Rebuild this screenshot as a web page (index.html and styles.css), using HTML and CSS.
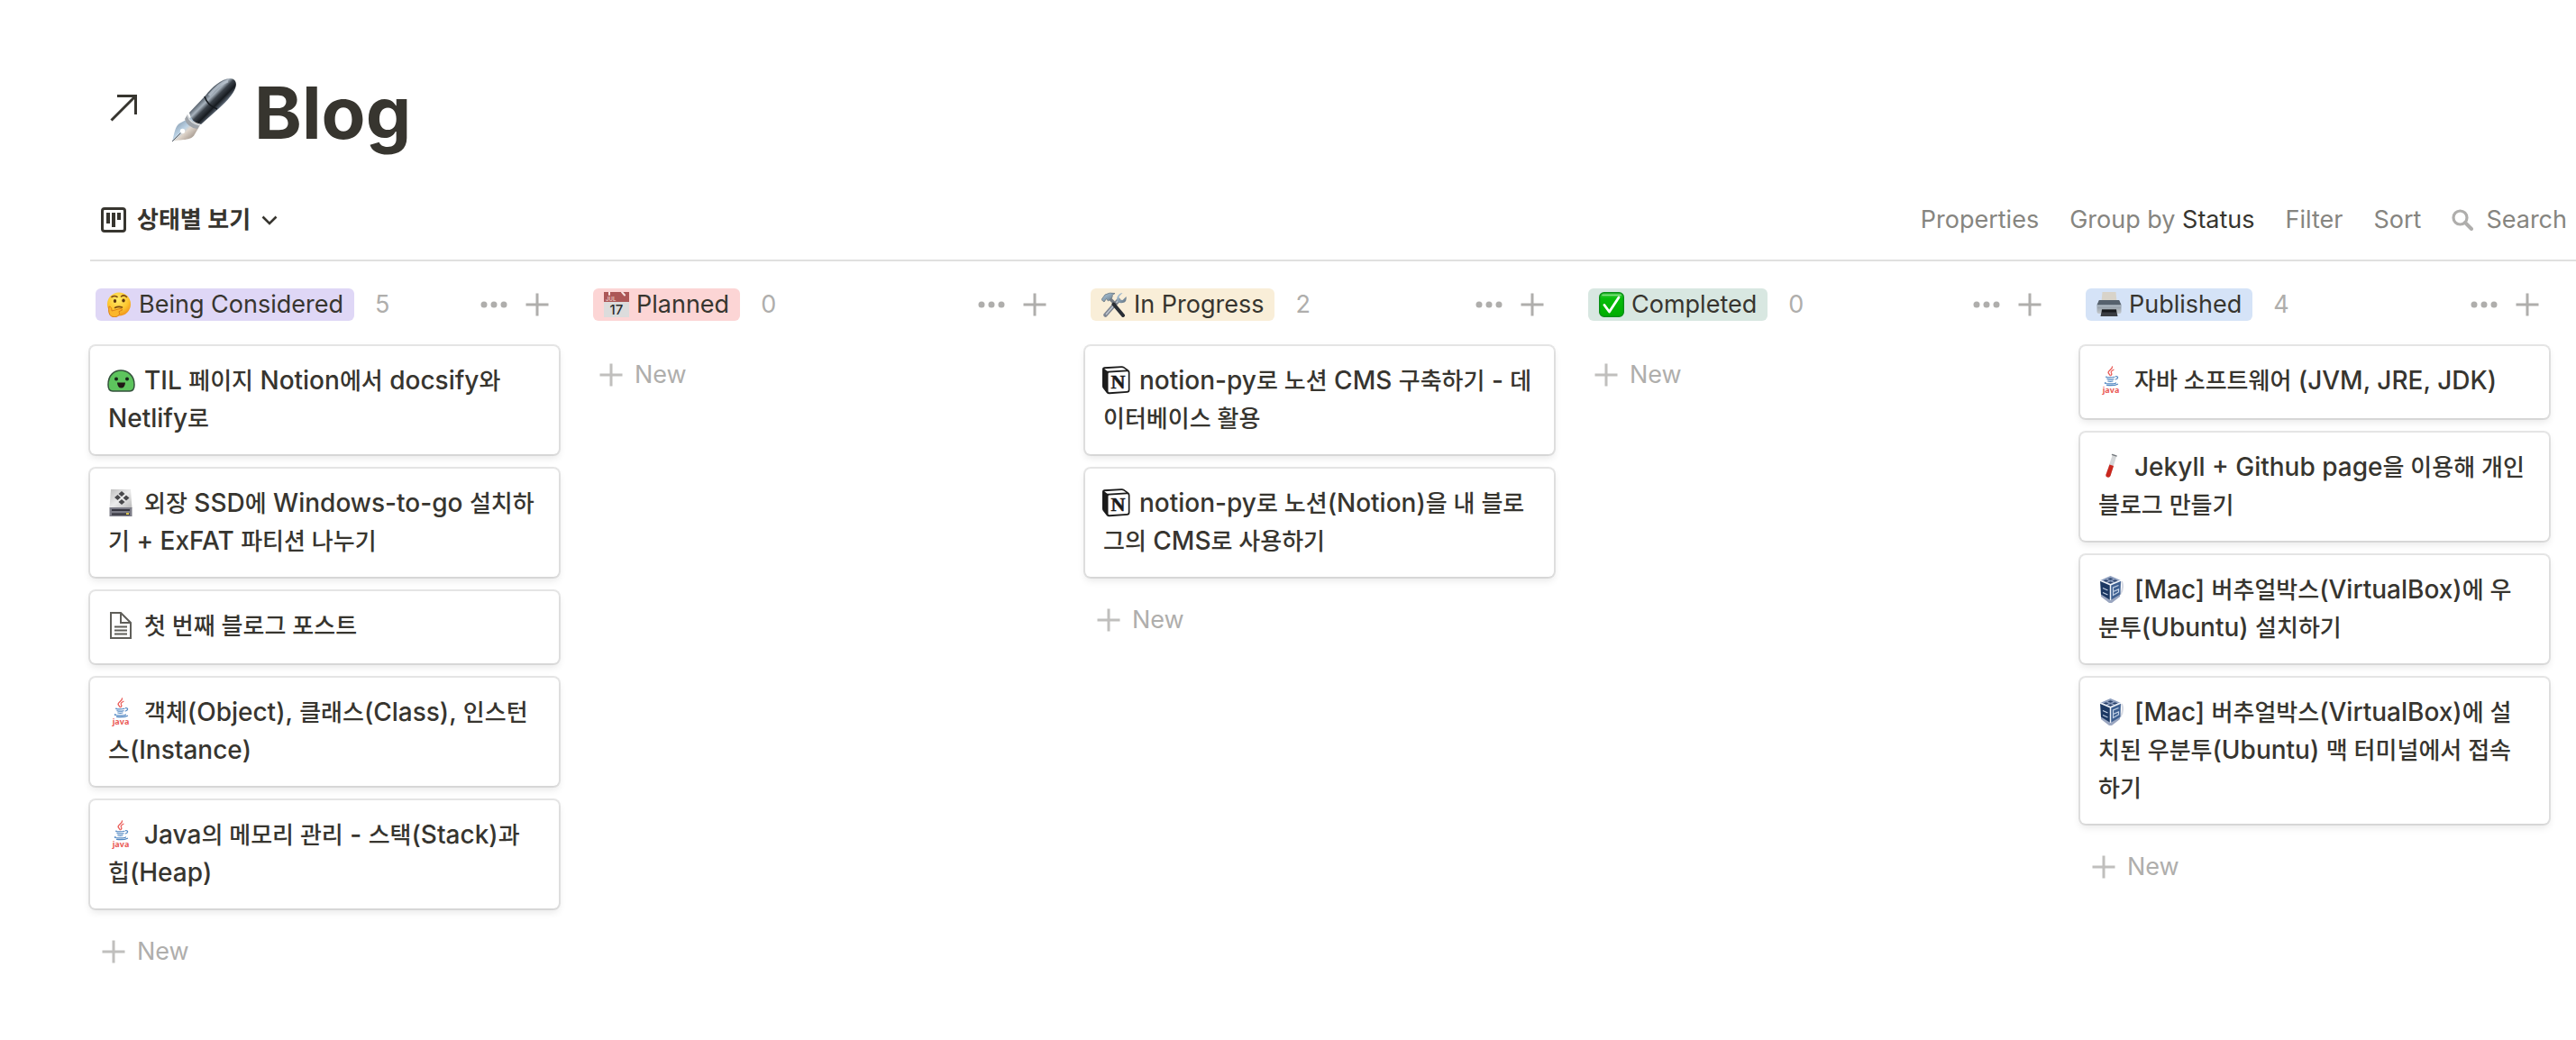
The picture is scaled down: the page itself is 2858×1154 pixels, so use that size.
FILE: index.html
```html
<!DOCTYPE html>
<html lang="ko">
<head>
<meta charset="utf-8">
<meta name="viewport" content="width=device-width, initial-scale=1">
<title>Blog</title>
<link rel="stylesheet" href="styles.css">
</head>
<body>
<svg class="defs" aria-hidden="true">
  <defs>
    <linearGradient id="barrel" gradientUnits="userSpaceOnUse" x1="34" y1="22" x2="50" y2="38">
      <stop offset="0" stop-color="#3c4651"/><stop offset=".3" stop-color="#a9b4bf"/><stop offset=".5" stop-color="#3a4149"/><stop offset=".75" stop-color="#171b20"/><stop offset="1" stop-color="#667382"/>
    </linearGradient>
    <linearGradient id="nib" x1="0" y1="0" x2="1" y2="1">
      <stop offset="0" stop-color="#6a7d91"/><stop offset=".45" stop-color="#bcd3e6"/><stop offset=".55" stop-color="#e0d6cc"/><stop offset="1" stop-color="#77695f"/>
    </linearGradient>
    <radialGradient id="face" cx=".45" cy=".3" r=".75">
      <stop offset="0" stop-color="#ffec6b"/><stop offset=".6" stop-color="#fdc62f"/><stop offset="1" stop-color="#ee8b1a"/>
    </radialGradient>
    <linearGradient id="check" x1="0" y1="0" x2="0" y2="1">
      <stop offset="0" stop-color="#3ecb3e"/><stop offset=".25" stop-color="#06bd0a"/><stop offset="1" stop-color="#00ad00"/>
    </linearGradient>
    <linearGradient id="printer" x1="0" y1="0" x2="0" y2="1">
      <stop offset="0" stop-color="#59636e"/><stop offset=".4" stop-color="#8d98a3"/><stop offset="1" stop-color="#c3c8cc"/>
    </linearGradient>
    <linearGradient id="steel" x1="0" y1="0" x2="1" y2="1">
      <stop offset="0" stop-color="#b3d0e6"/><stop offset="1" stop-color="#60707d"/>
    </linearGradient>
    <linearGradient id="drive" x1="0" y1="0" x2="1" y2="1">
      <stop offset="0" stop-color="#bdbdbd"/><stop offset=".5" stop-color="#ececec"/><stop offset="1" stop-color="#b9b9b9"/>
    </linearGradient>
    <symbol id="plus" viewBox="0 0 26 26"><path d="M13 0.5v25M0.5 13h25" stroke="currentColor" stroke-width="3"/></symbol>
    <symbol id="dots" viewBox="0 0 30 26"><g fill="currentColor"><circle cx="4" cy="13" r="3.5"/><circle cx="15" cy="13" r="3.5"/><circle cx="26" cy="13" r="3.5"/></g></symbol>
    <symbol id="java" viewBox="0 0 32 32">
      <g fill="none" stroke-linecap="round">
        <path d="M17.500 .8c.5 3.200-5.500 4.200-4.300 7.200l2 2.700" stroke="#ea5b57" stroke-width="1.300"/>
        <path d="M19 4.200c-3 1.400-3.500 2.600-2 4.800l-.8 1.400" stroke="#ea5b57" stroke-width="1.200"/>
        <path d="M11 12c-2 1.200 7 1.200 9 .2M12 14.700c2 .6 5 .6 7 0M12.800 17c1.500.5 3.700.5 5.200 0M10 18.600c-3.500 1.600 9 1.900 11.500.3M21.500 11.700c3-.3 2.800 2.400-.3 3.300M11.500 21.400c5 .5 9.500.2 12-1.200" stroke="#5288c2" stroke-width="1.200"/>
      </g>
      <text x="16" y="29.500" text-anchor="middle" font-family="Noto Sans" font-size="9" font-weight="700" fill="#ea5b57">java</text>
    </symbol>
    <symbol id="notion" viewBox="0 0 32 32">
      <path d="M1 3.500Q1 1.500 3 1.300L22 .2Q24 0 25.500 1.200L30 4.500Q31.500 5.500 31.500 7.500V27Q31.500 29.600 29 29.800L9 31.300Q7 31.500 5.800 30L1.600 24.500Q1 23.500 1 22Z" fill="#1b1b1b"/>
      <path d="M7.500 8.800Q7.500 7.600 8.700 7.500L28.400 6.300Q29.800 6.200 29.800 7.600V26.500Q29.800 27.900 28.500 28L8.800 29.200Q7.500 29.300 7.500 28Z" fill="#fff"/>
      <path d="M3.200 3.200L22.500 1.900Q23.600 1.900 24.500 2.500L27.500 4.500L7.500 5.800Q6.500 5.800 5.800 5.300Z" fill="#fff"/>
      <text x="18.500" y="25" text-anchor="middle" font-family="Liberation Serif" font-size="22" font-weight="700" fill="#1b1b1b" stroke="#1b1b1b" stroke-width=".6">N</text>
    </symbol>
    <symbol id="vbox" viewBox="0 0 32 32">
      <path d="M5 24l9 7h3l9-7v-3H5z" fill="#9aa6c0"/>
      <path d="M28 7q3 8-2 15" fill="none" stroke="#d5d9e3" stroke-width="2"/>
      <path d="M15.500 1L27 6 15.500 11 4 6z" fill="#8c9dbd"/>
      <path d="M4 6l11.500 5v17L5 21.500z" fill="#1c3863"/>
      <path d="M27 6l-11.500 5v17L26.500 21.500z" fill="#3d5f90"/>
      <path d="M15.500 3.200l3 1.300-3 1.300-3-1.300zM10.500 5.200l3 1.300-3 1.200-3-1.200zM20.500 5.200l3 1.300-3 1.200-3-1.200zM15.500 7.200l3 1.300-3 1.200-3-1.200z" fill="#2b436c"/>
      <path d="M4 6l11.500 5L27 6M15.500 11v17" fill="none" stroke="#f0f4fa" stroke-width="1.500"/>
      <path d="M7 14.500l5.500 2.500M7 19.500l5.500 2.500M24.500 11.500L18.500 14v8.500l6-3.500v-3l-6 2.500" fill="none" stroke="#c3d1e5" stroke-width="1.200"/>
    </symbol>
  </defs>
</svg>

<header class="page-header">
  <a class="open-link" href="#" aria-label="Open as page"><svg width="30" height="30" viewBox="0 0 30 30"><path d="M1.500 28.500L28 2M8 1.500h20.500V22" fill="none" stroke="currentColor" stroke-width="3"/></svg></a>
  <h1 class="page-title">
    <svg class="title-icon" width="72" height="72" viewBox="0 0 72 72" aria-hidden="true">
      <path d="M1 71C4 60 4 55 9 51l13-7 10 9-6 10C22 71 10 68 1 71z" fill="url(#nib)"/>
      <path d="M1 71l11-11" stroke="#59616a" stroke-width="1"/>
      <circle cx="12.500" cy="59.500" r="2.700" fill="#fff"/>
      <path d="M18 41q3 9 14 11l-3 5q-12-2-14-11z" fill="#9ea3a9"/>
      <path d="M20 39L38 20C45 11 56 1 65 1c7 0 8 6 6 11-3 8-12 17-19 23L33 52q-11-2-13-13z" fill="url(#barrel)"/>
      <path d="M37 21q3 10 14 14" fill="none" stroke="#15191e" stroke-width="1.500"/>
      <path d="M42 20Q53 6 63 4" fill="none" stroke="#bdc7d3" stroke-width="3" opacity=".7"/>
      <path d="M18 42q3 9 14 11" fill="none" stroke="#d7dadd" stroke-width="1.500"/>
    </svg>
    Blog
  </h1>
</header>

<nav class="toolbar" aria-label="Board view">
  <button class="view-switch" type="button">
    <svg width="28" height="28" viewBox="0 0 28 28" aria-hidden="true"><rect x="1.500" y="1.500" width="25" height="25" rx="2.500" fill="none" stroke="currentColor" stroke-width="3"/><path d="M6 6h4v12H6zM12 6h4v16h-4zM18 6h4v8h-4z" fill="currentColor"/></svg>
    <span class="ko">상태별 보기</span>
    <svg width="18" height="11" viewBox="0 0 18 11" aria-hidden="true"><path d="M1.500 1.500L9 9l7.500-7.500" fill="none" stroke="currentColor" stroke-width="2.600"/></svg>
  </button>
  <div class="tools">
    <button type="button">Properties</button>
    <button type="button">Group by <span class="strong">Status</span></button>
    <button type="button">Filter</button>
    <button type="button">Sort</button>
    <button class="search" type="button"><svg width="24" height="24" viewBox="0 0 24 24" aria-hidden="true"><circle cx="9.500" cy="9.500" r="7.500" fill="none" stroke="currentColor" stroke-width="3.200"/><path d="M15 15l7 7" stroke="currentColor" stroke-width="4" stroke-linecap="round"/></svg>Search</button>
  </div>
</nav>

<main class="board">
  <section class="column">
    <header class="column-header">
      <h2 class="tag tag-purple"><svg width="28" height="28" viewBox="0 0 28 28" aria-hidden="true"><circle cx="14" cy="13.500" r="13" fill="url(#face)"/><path d="M6 5.500q3-2 6 0M16.500 5q3-2.500 6 .5M9.500 17.500q4-2 8-.5" fill="none" stroke="#7b4a12" stroke-width="1.600" stroke-linecap="round"/><ellipse cx="9.500" cy="10" rx="1.700" ry="2" fill="#5b3410"/><ellipse cx="19" cy="9.500" rx="1.700" ry="2" fill="#5b3410"/><path d="M3 16q3 0 3 5l9-2.500q3-.3 2.500 1.700l-3.500 1.500q2 3-1.500 5.300-3.500 1.500-7 0Q1.500 24 3 16z" fill="#fbb62b" stroke="#dc8118" stroke-width="1"/></svg>Being Considered</h2>
      <span class="count">5</span>
      <button class="icon-button" type="button" aria-label="More"><svg width="30" height="26"><use href="#dots"/></svg></button>
      <button class="icon-button" type="button" aria-label="Add"><svg width="26" height="26"><use href="#plus"/></svg></button>
    </header>
    <a class="card" href="#"><svg class="card-icon" width="32" height="32" viewBox="0 0 32 32" aria-hidden="true"><path d="M2 21C2 10 9 5 16 5s15 5 15 16q0 7-5 7H7q-5 0-5-7z" fill="#5dc45d" stroke="#33523b" stroke-width="1.500"/><circle cx="11" cy="14.500" r="2" fill="#17251a"/><circle cx="23" cy="14.500" r="2" fill="#17251a"/><path d="M12 18.500h9q-.5 6-4.500 6t-4.500-6z" fill="#201815"/></svg>TIL <span class="ko">페이지</span> Notion<span class="ko">에서</span> docsify<span class="ko">와</span> Netlify<span class="ko">로</span></a>
    <a class="card" href="#"><svg class="card-icon" width="32" height="32" viewBox="0 0 32 32" aria-hidden="true"><path d="M5 1h22l1.500 21H3.500z" fill="url(#drive)"/><path d="M3.500 21h25v10h-25z" fill="#7c7c87"/><path d="M6 24h20M6 28.500h20" stroke="#34343e" stroke-width="2"/><path d="M22 28h3" stroke="#d8c14b" stroke-width="2"/><path d="M17 3l3.500 3-3.500 3-3.500-3zM12.500 7l3.500 3-3.500 3L9 10zM22 7.500l3.500 3-3.500 3-3.500-3zM17 12l3.500 3-3.500 3-3.500-3z" fill="#48484b"/></svg><span class="ko">외장</span> SSD<span class="ko">에</span> Windows-to-go <span class="ko">설치하기</span> + ExFAT <span class="ko">파티션 나누기</span></a>
    <a class="card" href="#"><svg class="card-icon" width="32" height="32" viewBox="0 0 32 32" aria-hidden="true"><path d="M5 2h11l11 11v17H5zM16 2v11h11M9 17.500h14M9 21.500h14M9 25.500h14" fill="none" stroke="#5f5e59" stroke-width="2"/></svg><span class="ko">첫 번째 블로그 포스트</span></a>
    <a class="card" href="#"><svg class="card-icon" width="32" height="32" aria-hidden="true"><use href="#java"/></svg><span class="ko">객체</span>(Object), <span class="ko">클래스</span>(Class), <span class="ko">인스턴스</span>(Instance)</a>
    <a class="card" href="#"><svg class="card-icon" width="32" height="32" aria-hidden="true"><use href="#java"/></svg>Java<span class="ko">의 메모리 관리</span> - <span class="ko">스택</span>(Stack)<span class="ko">과 힙</span>(Heap)</a>
    <button class="new" type="button"><svg width="26" height="26" aria-hidden="true"><use href="#plus"/></svg>New</button>
  </section>

  <section class="column">
    <header class="column-header">
      <h2 class="tag tag-red"><svg width="28" height="28" viewBox="0 0 28 28" aria-hidden="true"><path d="M0 0h28v11H0z" fill="#ac5757"/><path d="M0 11h28v17H0z" fill="#dcdcdc"/><path d="M6 0v3M20 0l3 3.500" stroke="#f6e4e2" stroke-width="2" stroke-linecap="round"/><text x="2" y="9.500" font-family="Inter" font-size="6" font-weight="700" fill="#e3bcba">JUL</text><text x="14" y="25" text-anchor="middle" font-family="Inter" font-size="15" font-weight="500" fill="#2e2e2e">17</text></svg>Planned</h2>
      <span class="count">0</span>
      <button class="icon-button" type="button" aria-label="More"><svg width="30" height="26"><use href="#dots"/></svg></button>
      <button class="icon-button" type="button" aria-label="Add"><svg width="26" height="26"><use href="#plus"/></svg></button>
    </header>
    <button class="new" type="button"><svg width="26" height="26" aria-hidden="true"><use href="#plus"/></svg>New</button>
  </section>

  <section class="column">
    <header class="column-header">
      <h2 class="tag tag-yellow"><svg width="28" height="28" viewBox="0 0 28 28" aria-hidden="true"><path d="M19 9L4.500 25.500" stroke="#7e8591" stroke-width="4.500" stroke-linecap="round"/><path d="M19 9L5 25" stroke="#c1c8d1" stroke-width="1.500"/><path d="M23.500 1l-4 4 .5 3.500 3.500.5L27.500 5q1 4.500-2 6.500-4.500 1.700-7-.5-2.500-3-.500-6.500Q20 1 23.500 1z" fill="url(#steel)"/><path d="M9 7l4 4 3 3" fill="none" stroke="#747b84" stroke-width="3.500"/><path d="M13.500 13.500L24 26" stroke="#292e36" stroke-width="4" stroke-linecap="round"/><path d="M0 8.500l4-5.500Q9 0 15 1.500 11 3 12 6l-4.500 4-2-2.500L3 11z" fill="url(#steel)" stroke="#6a7782" stroke-width=".8"/></svg>In Progress</h2>
      <span class="count">2</span>
      <button class="icon-button" type="button" aria-label="More"><svg width="30" height="26"><use href="#dots"/></svg></button>
      <button class="icon-button" type="button" aria-label="Add"><svg width="26" height="26"><use href="#plus"/></svg></button>
    </header>
    <a class="card" href="#"><svg class="card-icon" width="32" height="32" aria-hidden="true"><use href="#notion"/></svg>notion-py<span class="ko">로 노션</span> CMS <span class="ko">구축하기</span> - <span class="ko">데이터베이스 활용</span></a>
    <a class="card" href="#"><svg class="card-icon" width="32" height="32" aria-hidden="true"><use href="#notion"/></svg>notion-py<span class="ko">로 노션</span>(Notion)<span class="ko">을 내 블로그의</span> CMS<span class="ko">로 사용하기</span></a>
    <button class="new" type="button"><svg width="26" height="26" aria-hidden="true"><use href="#plus"/></svg>New</button>
  </section>

  <section class="column">
    <header class="column-header">
      <h2 class="tag tag-green"><svg width="28" height="28" viewBox="0 0 28 28" aria-hidden="true"><rect x=".7" y=".7" width="26.600" height="26.600" rx="5" fill="url(#check)" stroke="#0b8f18" stroke-width="1.400"/><path d="M4 3.500h20" stroke="#9be59b" stroke-width="1.500" stroke-linecap="round" opacity=".8"/><path d="M6 14.500l5.500 7.500L22 6" fill="none" stroke="#fff" stroke-width="2.800" stroke-linecap="round" stroke-linejoin="round"/></svg>Completed</h2>
      <span class="count">0</span>
      <button class="icon-button" type="button" aria-label="More"><svg width="30" height="26"><use href="#dots"/></svg></button>
      <button class="icon-button" type="button" aria-label="Add"><svg width="26" height="26"><use href="#plus"/></svg></button>
    </header>
    <button class="new" type="button"><svg width="26" height="26" aria-hidden="true"><use href="#plus"/></svg>New</button>
  </section>

  <section class="column">
    <header class="column-header">
      <h2 class="tag tag-blue"><svg width="28" height="28" viewBox="0 0 28 28" aria-hidden="true"><path d="M6.500 0h15l1 11h-17z" fill="#d8d3c9"/><path d="M3 9h22l2.500 5v8q0 2-2 2h-23q-2 0-2-2v-8z" fill="url(#printer)"/><path d="M3 9h22l2 5H1z" fill="#56616d"/><path d="M1 15.500h26" stroke="#aeb8c2" stroke-width="1.500"/><path d="M6 19.500h16l1.500 7.500h-19z" fill="#3a3d42"/><path d="M6 19.500h16v3H6z" fill="#17191c"/></svg>Published</h2>
      <span class="count">4</span>
      <button class="icon-button" type="button" aria-label="More"><svg width="30" height="26"><use href="#dots"/></svg></button>
      <button class="icon-button" type="button" aria-label="Add"><svg width="26" height="26"><use href="#plus"/></svg></button>
    </header>
    <a class="card" href="#"><svg class="card-icon" width="32" height="32" aria-hidden="true"><use href="#java"/></svg><span class="ko">자바 소프트웨어</span> (JVM, JRE, JDK)</a>
    <a class="card" href="#"><svg class="card-icon" width="32" height="32" viewBox="0 0 32 32" aria-hidden="true"><path d="M17.500 3.500l4.500 1.500-6.500 21q-1.500 3-4.500 1-1-1-.5-2.500z" fill="#d4d6d8"/><path d="M14.500 13.500l4.500 1.500-3.500 11q-1.500 3-4.500 1-1-1-.5-2.500z" fill="#c9271e"/><path d="M17.500 2.500l4.500 1.500" stroke="#777c80" stroke-width="1.500" stroke-linecap="round"/></svg>Jekyll + Github page<span class="ko">을 이용해 개인 블로그 만들기</span></a>
    <a class="card" href="#"><svg class="card-icon" width="32" height="32" aria-hidden="true"><use href="#vbox"/></svg>[Mac] <span class="ko">버추얼박스</span>(VirtualBox)<span class="ko">에 우분투</span>(Ubuntu) <span class="ko">설치하기</span></a>
    <a class="card" href="#"><svg class="card-icon" width="32" height="32" aria-hidden="true"><use href="#vbox"/></svg>[Mac] <span class="ko">버추얼박스</span>(VirtualBox)<span class="ko">에 설치된 우분투</span>(Ubuntu) <span class="ko">맥 터미널에서 접속하기</span></a>
    <button class="new" type="button"><svg width="26" height="26" aria-hidden="true"><use href="#plus"/></svg>New</button>
  </section>
</main>
</body>
</html>
```
FILE: styles.css
```css
* {
  box-sizing: border-box;
}

body {
  margin: 0;
  background: #fff;
  color: #37352f;
  font-family: Inter, "Noto Sans CJK KR", sans-serif;
  font-size: 27px;
  line-height: 42px;
}

button {
  margin: 0;
  padding: 0;
  border: 0;
  background: none;
  color: inherit;
  font: inherit;
  white-space: nowrap;
  cursor: pointer;
}

a {
  color: inherit;
  text-decoration: none;
}

svg {
  flex: none;
}

.defs {
  position: absolute;
  width: 0;
  height: 0;
}

/* Hangul glyphs are wide in this family, so they run one step smaller */
.ko {
  font-size: 26px;
  line-height: 26px;
}

.page-header {
  display: flex;
  align-items: center;
  gap: 38px;
  padding: 77px 30px 0 122px;
}

.open-link {
  display: flex;
  margin-bottom: 10px;
}

.page-title {
  display: flex;
  align-items: center;
  gap: 20px;
  margin: 0;
  font-size: 80px;
  font-weight: 700;
  line-height: 96px;
}

.title-icon {
  margin-bottom: 6px;
}

.toolbar {
  display: flex;
  align-items: center;
  justify-content: space-between;
  height: 90px;
  margin: 27px 0 0 100px;
  padding: 0 10px 0 12px;
  border-bottom: 2px solid #e0e0df;
}

.view-switch {
  display: flex;
  align-items: center;
  gap: 12px;
  font-weight: 600;
}

.tools {
  display: flex;
  align-items: center;
  gap: 34px;
  color: #868580;
}

.strong {
  color: #37352f;
}

.search {
  display: flex;
  align-items: center;
  gap: 14px;
}

.search svg {
  color: #afaeac;
}

.board {
  display: grid;
  grid-template-columns: repeat(5, minmax(0, 1fr));
  gap: 32px;
  padding: 0 30px 0 100px;
}

.column {
  display: flex;
  flex-direction: column;
}

.column-header {
  display: flex;
  align-items: center;
  gap: 20px;
  padding: 30px 11px 28px 6px;
}

.tag {
  display: flex;
  align-items: center;
  gap: 8px;
  height: 36px;
  margin: 0;
  padding: 0 12px;
  border-radius: 6px;
  font-size: 27px;
  font-weight: 400;
  line-height: 36px;
  white-space: nowrap;
}

.tag-purple { background: #dfd7f6; }
.tag-red { background: #fcd5d5; }
.tag-yellow { background: #f9eed8; }
.tag-green { background: #d8e7e1; }
.tag-blue { background: #d5e3f7; }

.count {
  flex: 1;
  padding-left: 3px;
  color: #afaeac;
  line-height: 36px;
}

.icon-button {
  display: flex;
  color: #afaeac;
}

.card {
  display: block;
  min-height: 80px;
  margin-bottom: 16px;
  padding: 17px 20px 19px;
  border-radius: 6px;
  background: #fff;
  box-shadow: 0 0 0 2px rgba(15, 15, 15, .1), 0 4px 8px rgba(15, 15, 15, .1);
  font-size: 28px;
  font-weight: 500;
}

.card-icon {
  margin: 0 10px 0 -2px;
  vertical-align: -6px;
}

.new {
  display: flex;
  align-items: center;
  gap: 13px;
  height: 64px;
  padding: 0 13px;
  color: #afaeac;
}

.new svg {
  color: #c0bfbd;
}
```
